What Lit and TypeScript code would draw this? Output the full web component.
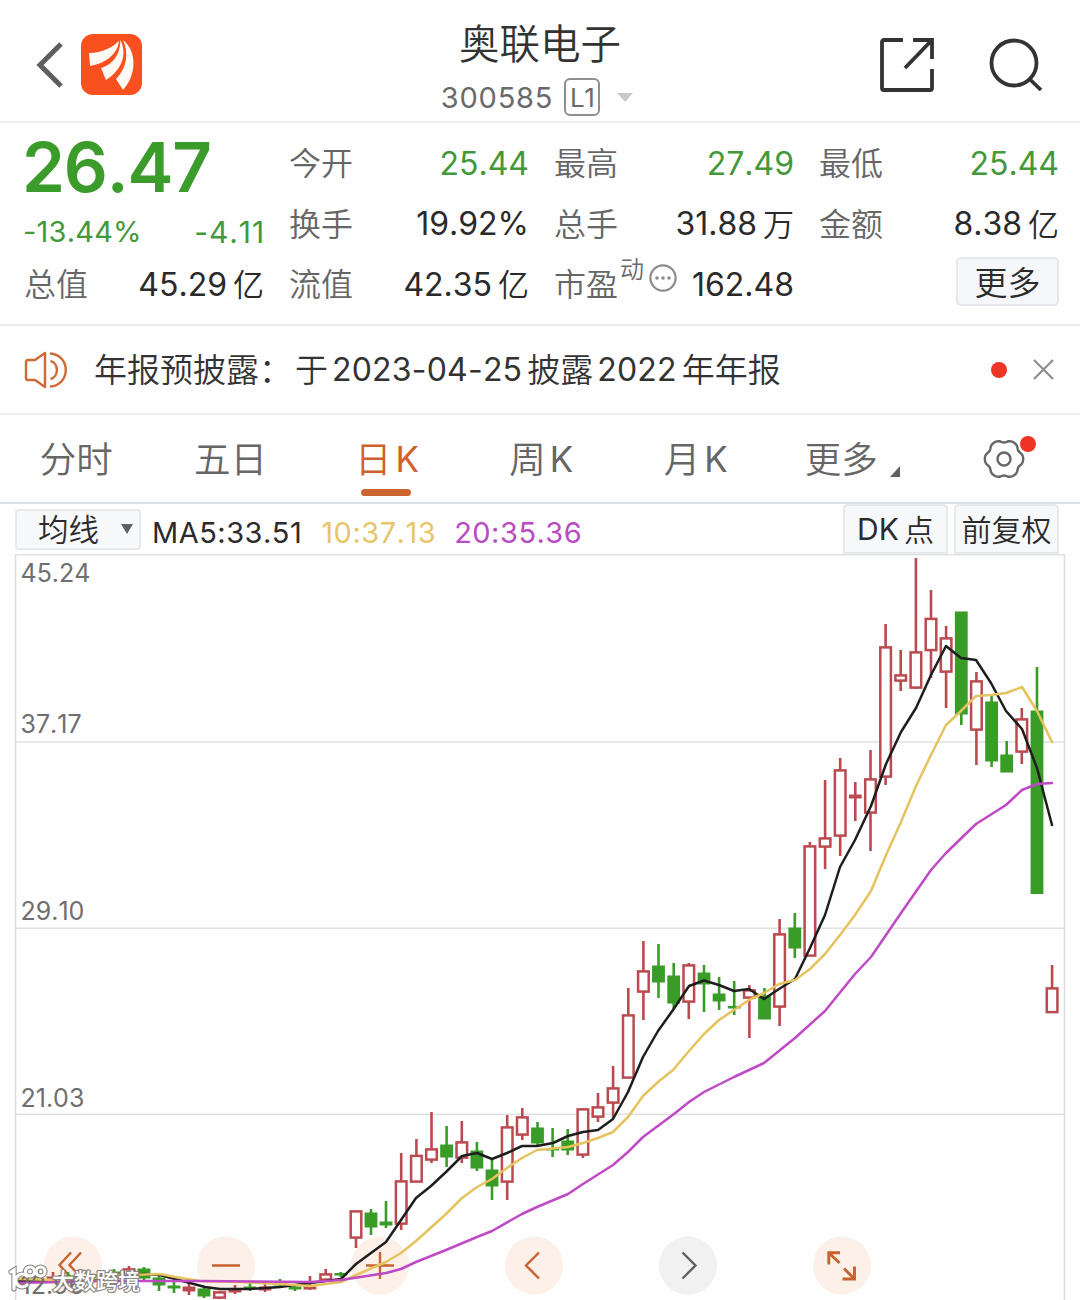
import { LitElement, html, svg, css } from "lit";
import { customElement } from "lit/decorators.js";
import { classMap } from "lit/directives/class-map.js";

type Candle = [x: number, high: number, top: number, bottom: number, low: number, up: 0 | 1];

const CANDLES: Candle[] = [
  [23, 1277, 1279, 1283, 1285, 1],
  [38, 1269, 1274, 1276, 1281, 0],
  [53, 1272, 1277, 1279, 1282, 1],
  [68, 1272, 1276, 1279, 1284, 0],
  [84, 1273, 1276, 1279, 1282, 1],
  [99, 1270, 1275, 1278, 1281, 0],
  [114, 1269, 1272, 1274, 1278, 0],
  [129, 1266, 1269, 1275, 1277, 1],
  [144, 1267, 1269, 1278, 1280, 0],
  [159, 1276, 1278, 1285, 1291, 0],
  [174, 1280, 1286, 1288, 1293, 0],
  [189, 1283, 1287, 1291, 1295, 1],
  [204, 1288, 1289, 1296, 1298, 0],
  [219.5, 1291, 1292, 1298, 1299, 1],
  [235, 1285, 1289, 1292, 1294, 1],
  [250, 1282, 1287, 1288, 1291, 0],
  [265, 1284, 1287, 1290, 1292, 1],
  [280, 1279, 1283, 1285, 1288, 0],
  [295, 1284, 1287, 1289, 1291, 0],
  [310, 1276, 1287, 1289, 1290, 1],
  [325.7, 1269, 1274, 1280, 1280, 1],
  [340.8, 1272, 1273.5, 1275, 1277, 0],
  [356, 1211, 1211, 1238, 1248, 1],
  [371, 1209, 1213, 1227, 1235, 0],
  [386, 1201, 1222, 1225, 1228, 0],
  [401.2, 1153, 1181, 1224, 1230, 1],
  [416.4, 1139, 1155.5, 1182, 1182, 1],
  [431.5, 1112, 1149, 1160, 1163, 1],
  [446.6, 1126, 1145, 1157, 1167, 0],
  [461.8, 1121, 1142, 1158, 1163, 1],
  [476.9, 1142, 1151, 1168, 1171, 0],
  [492, 1160, 1170, 1186, 1200, 0],
  [507.2, 1115, 1127, 1182, 1200, 1],
  [522.3, 1108, 1117, 1135, 1140, 1],
  [537.5, 1122, 1128, 1143, 1147, 0],
  [552.6, 1128, 1149, 1150, 1157, 0],
  [567.7, 1129, 1141, 1150, 1155, 0],
  [582.9, 1108, 1109, 1155, 1158, 1],
  [598, 1093, 1107, 1117, 1122, 1],
  [613.1, 1066, 1088, 1103, 1118, 1],
  [628.3, 988, 1015, 1078, 1078, 1],
  [643.4, 941, 971, 992, 1020, 1],
  [658.5, 944, 966, 982, 998, 0],
  [673.7, 963, 976, 1003, 1009, 0],
  [688.8, 963, 965, 1002, 1019, 1],
  [704, 965, 973, 984, 1012, 0],
  [719.1, 977, 994, 1001, 1010, 0],
  [734.2, 981, 1006.5, 1008, 1015, 0],
  [749.4, 985, 990, 998, 1038, 1],
  [764.5, 988, 996, 1019, 1019, 0],
  [779.6, 919, 934, 1007, 1026, 1],
  [794.8, 913, 928, 948, 958, 0],
  [809.9, 842, 846, 956, 956, 1],
  [825.1, 780, 838, 847, 869, 1],
  [840.2, 758, 770, 836, 856, 1],
  [855.3, 782, 795, 798, 821, 1],
  [870.5, 750, 779, 813, 851, 1],
  [885.6, 624, 647, 777, 785, 1],
  [900.7, 650, 675, 681, 691, 1],
  [915.9, 558, 652, 688, 689, 1],
  [931, 590, 618.5, 650.5, 678, 1],
  [946.1, 626, 638, 672, 708, 1],
  [961.3, 612, 612, 714, 725, 0],
  [976.4, 672, 681, 730, 765, 1],
  [991.6, 696, 702, 761, 767, 0],
  [1006.7, 741, 755, 772, 772, 0],
  [1021.8, 708, 719, 752, 764, 1],
  [1037, 667, 711, 893.5, 893, 0],
  [1052.1, 965, 988, 1012.5, 1012, 1],
];

const MA5 =
  "17,1281 60,1281 100,1280 115,1278 130,1275 145,1274 160,1275 175,1279 190,1283 205,1287 220,1289 250,1289 280,1287 310,1283 341,1279 356,1264 386,1242 416,1198 431,1186 446,1172 462,1156 477,1153 492,1159 507,1153 522,1146 537,1146 553,1143 568,1136 583,1132 598,1130 613,1119 628,1092 643,1057 658,1031 673,1010 689,986 704,980.5 719,985 734,991 749,989 764,999 779,989 795,979 810,948 825,915 840,867 855,840 871,806 886,764 901,732 916,708 931,675 946,646 961,658 976,660 991,683 1006,711 1022,729 1037,768 1052,825";
const MA10 =
  "17,1279 60,1280 100,1278 130,1275 160,1274 175,1277 200,1281 240,1282 280,1284 310,1286 341,1282 356,1275 386,1262 401,1253 416,1241 446,1214 462,1198 477,1187 492,1179 507,1168 522,1158 537,1150 553,1148.5 568,1147 583,1143 598,1138 613,1132 628,1117 643,1096 658,1082 673,1070 689,1051 704,1034 719,1020 734,1010 749,1000 764,993 779,984 795,980 810,969 825,954 840,935 855,915 871,891 886,855 901,822 916,786 931,755 946,725 961,711 976,696 991,695 1006,693 1022,687 1037,711 1052,742";
const MA20 =
  "17,1283 100,1281 200,1281 310,1282 341,1280 386,1273 401,1269 416,1262 446,1250 477,1237 492,1231 522,1214 537,1207 568,1194 583,1184 613,1165 628,1152 643,1137 674,1114 689,1102 704,1092 734,1077 764,1063 795,1038 825,1011 855,974 871,957 901,913 931,870 946,853 976,824 1006,805 1022,790 1037,784 1052,783";

const UP = "#bb4a50";
const DOWN = "#399c27";

@customElement("kline-chart")
export class KlineChart extends LitElement {
  static styles = css`
    :host { display: block; position: relative; height: 746px; overflow: hidden; }
    .plot { display: block; width: 1080px; height: 746px; }
    .axis { font: 25px Inter, sans-serif; font-kerning: none; fill: #6f6f6f; }
    .mark { font: 500 22px "Noto Sans CJK SC", sans-serif; fill: #fff; stroke: #8a8580; stroke-width: 2.4px; paint-order: stroke; stroke-linejoin: round; }
  `;

  private candle([x, high, top, bottom, low, up]: Candle) {
    const color = up ? UP : DOWN;
    const thin = bottom - top < 5;
    if (up && !thin) {
      return svg`
        <path d="M${x} ${high}V${top}M${x} ${bottom}V${low}" stroke=${color} stroke-width="2.6"/>
        <rect x=${x - 5.3} y=${top + 0.4} width="10.6" height=${bottom - top - 0.8} fill="#fff" stroke=${color} stroke-width="2.5"/>`;
    }
    return svg`
      <path d="M${x} ${high}V${low}" stroke=${color} stroke-width="2.6"/>
      <rect x=${x - 6.4} y=${top - 0.5} width="12.8" height=${bottom - top + 1} fill=${color}/>`;
  }

  render() {
    return html`<svg class="plot" viewBox="0 554 1080 746">
      <g fill="#fdf0e8">
        ${[73, 226, 380, 534, 842].map((x) => svg`<circle cx=${x} cy="1265.5" r="29"/>`)}
        <circle cx="688" cy="1265.5" r="29" fill="#f1f1f1"/>
      </g>
      <g fill="none" stroke="#dfe1e2" stroke-width="1.6">
        <path d="M15.5 1300V554.8H1064.5V1300"/>
        <path d="M16 742H1064M16 928.3H1064M16 1114.3H1064"/>
      </g>
      <g fill="none" stroke="#c8622f" stroke-width="2.4">
        <path d="M71 1252.5L59.5 1265L71 1277.5M81 1252.5L69.5 1265L81 1277.5"/>
        <path d="M212 1265.5H240M366 1265.5H394M380 1252V1279"/>
        <path d="M539 1252.5L526 1265.5L539 1278.5"/>
        <path d="M840 1252.8H828.8V1264.5M829.5 1253.5L839.5 1263M842.5 1279H854.5V1266.5M844 1268.5L854 1278.5" stroke-width="2.9"/>
        <path d="M682.5 1252.5L695.5 1265.5L682.5 1278.5" stroke="#606060"/>
      </g>
      ${CANDLES.map((c) => this.candle(c))}
      <g fill="none" stroke-width="2.5" stroke-linejoin="round" stroke-linecap="round">
        <polyline points=${MA5} stroke="#1e1e1e"/>
        <polyline points=${MA10} stroke="#e5c35e"/>
        <polyline points=${MA20} stroke="#bf49c6"/>
      </g>
      <g class="axis">
        <text x="20.5" y="581.5">45.24</text>
        <text x="20.5" y="733">37.17</text>
        <text x="20.5" y="919.5">29.10</text>
        <text x="20.5" y="1106.5">21.03</text>
        <text x="20.5" y="1294">12.96</text>
      </g>
      <g fill="none" stroke="#8a8580" stroke-width="5.2" stroke-linecap="round">
        <path d="M11 1272L14 1270V1289M27 1276A6.5 6.5 0 1 0 27 1285"/>
        <circle cx="30" cy="1271.5" r="4.5"/><circle cx="40.5" cy="1271.5" r="4.5"/>
      </g>
      <g fill="none" stroke="#fff" stroke-width="3.2" stroke-linecap="round">
        <path d="M11 1272L14 1270V1289M27 1276A6.5 6.5 0 1 0 27 1285"/>
        <circle cx="30" cy="1271.5" r="4.5"/><circle cx="40.5" cy="1271.5" r="4.5"/>
      </g>
      <text class="mark" x="52" y="1289">大数跨境</text>
    </svg>`;
  }
}

/** Six-lobed cog outline, sampled around a 42px box. */
const GEAR = Array.from({ length: 121 }, (_, i) => {
  const a = (i / 120) * Math.PI * 2;
  const r = 18.1 + 1.3 * Math.cos(6 * a) - 0.25 * Math.cos(12 * a);
  return `${(21 + r * Math.cos(a)).toFixed(2)},${(21 + r * Math.sin(a)).toFixed(2)}`;
}).join(" ");

const num = (n: string, unit = "") => html`<span class="num">${n}</span>${unit ? html`<span class="unit">${unit}</span>` : ""}`;

@customElement("app-root")
export class AppRoot extends LitElement {
  static styles = css`
    :host { display: block; width: 1080px; height: 1300px; overflow: hidden; background: #fefefe; color: #2b2b2b;
      font-family: Inter, "Noto Sans CJK SC", sans-serif; font-weight: 400; font-kerning: none; }
    * { box-sizing: border-box; }
    .header { height: 123px; border-bottom: 2px solid #efefef; display: grid; grid-template-columns: 360px 360px 360px; }
    .left { display: flex; align-items: center; gap: 17px; padding: 8px 0 0 35px; }
    .right { display: flex; align-items: center; justify-content: flex-end; gap: 52px; padding: 9px 37px 0 0; }
    .mid { display: flex; flex-direction: column; align-items: center; }
    .title { font-size: 40.5px; line-height: 50px; margin-top: 20px; color: #333; white-space: nowrap; font-weight: 350; }
    .code { display: flex; align-items: center; height: 38px; margin-top: 8px; padding-right: 6px; font-size: 29px; letter-spacing: 0.8px; color: #6a6a6a; }
    .level { width: 36px; height: 38px; margin-left: 11px; border: 2px solid #8f8f8f; border-radius: 6px; font-size: 26px; letter-spacing: -0.5px; display: grid; place-items: center; }
    .caret { margin-left: 17px; border: 8px solid transparent; border-top: 9px solid #c9c9c9; border-bottom: 0; }
    .quote { height: 203px; padding: 10px 21px 0 24px; border-bottom: 2px solid #ececec; display: grid;
      grid-template-columns: repeat(4, 240px); grid-template-rows: repeat(3, 60.5px); column-gap: 25px; }
    .cell { display: flex; align-items: center; justify-content: space-between; white-space: nowrap; }
    .label { font-size: 32px; color: #666; font-weight: 350; margin-top: -4px; }
    .value { display: flex; align-items: center; font-size: 32px; color: #2a2a2a; }
    .unit { font-size: 31px; margin: -3px 0 0 6px; font-weight: 350; }
    .green { color: #43983a; }
    .price { font-size: 69px; font-weight: 600; letter-spacing: -1.2px; color: #3b9b2b; line-height: 60px; padding-top: 7px; margin-left: -2px; }
    .change { font-size: 29px; padding-top: 16px; margin-left: -1px; }
    .pct { letter-spacing: 0.2px; }
    .diff { font-size: 30px; letter-spacing: 0.9px; margin-right: -1px; }
    .pe { display: flex; align-items: center; }
    .sup { font-size: 24px; color: #6b6b6b; margin: -33px 5px 0 2px; font-weight: 350; }
    .info { margin-top: -12px; }
    .more { justify-self: end; align-self: center; width: 103px; height: 49px; border: 2px solid #e6e7ea; border-radius: 5px; background: #f6f7fa;
      font-size: 33px; line-height: 48px; text-align: center; margin-top: -5px; font-weight: 350; }
    .notice { height: 89px; border-bottom: 2px solid #ececec; display: flex; align-items: center; padding: 0 26px 0 24px; }
    .msg { flex: 1; margin-left: 26px; font-size: 33px; display: flex; align-items: center; white-space: pre; color: #333; font-weight: 350; }
    .cjk { margin-top: -4px; }
    .msg .num { font-size: 32px; letter-spacing: 0.2px; margin-left: 4px; font-weight: 400; }
    .yu { margin-left: 3px; }
    .dot { width: 16px; height: 16px; border-radius: 50%; background: #ee3427; }
    .close { margin-left: 26px; }
    .tabs { height: 89px; border-bottom: 2px solid #dcdfe1; display: grid; grid-template-columns: repeat(7, 154.4px); }
    .tab { position: relative; display: flex; align-items: center; justify-content: center; font-size: 36.5px; color: #666; font-weight: 350; }
    .tab .cjk { margin: -3px 0 0 -2px; }
    .tab .ck { margin-left: 2px; }
    .tab .k { margin-left: 4px; font-weight: 400; font-size: 35px; }
    .tab.active { color: #cf622c; }
    .tab.active::after { content: ""; position: absolute; left: 52px; bottom: 6px; width: 50px; height: 7px; border-radius: 4px; background: #cb6430; }
    .tab .drop { margin-left: 6px; }
    .corner { align-self: flex-end; margin: 0 0 25px 12px; border-left: 10px solid transparent; border-bottom: 11px solid #606060; }
    .badge { position: absolute; left: 94px; top: 21px; width: 16px; height: 16px; border-radius: 50%; background: #ee3427; }
    .toolbar { height: 50px; display: flex; align-items: center; padding: 0 21px 0 15px; white-space: nowrap; font-size: 29px; }
    .select { width: 126px; height: 41px; border: 2px solid #e7e8e9; border-radius: 4px; background: #f8f9fa; display: flex; align-items: center;
      justify-content: space-between; padding: 0 6px 0 21px; font-size: 30.5px; font-weight: 350; }
    .select .cjk { margin-top: -3px; }
    .tri { border: 6px solid transparent; border-top: 10px solid #606060; border-bottom: 0; }
    .ma { padding-top: 7px; margin-left: 11px; letter-spacing: 0.5px; }
    .m10 { color: #e6c66a; margin-left: 19px; }
    .m20 { color: #b84cc4; margin-left: 18px; }
    .chip { width: 105px; height: 50px; margin-left: 6px; border: 2px solid #e7e8ea; border-radius: 5px 5px 0 0; background: #f7f8fa; display: flex; align-items: center; justify-content: center; font-size: 30px; }
    .chip .cjk { font-weight: 350; margin-top: -3px; }
    .first { margin-left: auto; }
    .gap { margin-left: 5px; }
  `;

  private cell(label: string, n: string, unit = "", green = false) {
    return html`<div class="cell"><span class="label">${label}</span>
      <span class=${classMap({ value: true, green })}>${num(n, unit)}</span></div>`;
  }

  render() {
    return html`
      <div class="header">
        <div class="left">
          <svg width="29" height="46" viewBox="0 0 29 46" fill="none" stroke="#5e5e5e" stroke-width="5"><path d="M26 2L5 23L26 44"/></svg>
          <svg width="61" height="61" viewBox="0 0 61 61">
            <rect width="61" height="61" rx="12" fill="#f8501f"/>
            <g fill="#fffaf4">
              <path d="M8 19C21 19 32 13 38 7C37 18 27 29 9 32Z"/>
              <path d="M39.5 6C46 20 42 35 25 46L20 34C33 30 39 20 39.5 6Z"/>
              <path d="M42 6C57 18 55 42 42 56L35 45C46 34 48 19 42 6Z"/>
            </g>
          </svg>
        </div>
        <div class="mid">
          <div class="title">奥联电子</div>
          <div class="code">300585<span class="level">L1</span><i class="caret"></i></div>
        </div>
        <div class="right">
          <svg width="56" height="56" viewBox="0 0 56 56" fill="none" stroke="#333" stroke-width="3.8">
            <path d="M24 3H5Q3 3 3 5V51Q3 53 5 53H51Q53 53 53 51V32"/><path d="M34 3H53V22M52 4L26 31"/>
          </svg>
          <svg width="56" height="56" viewBox="0 0 56 56" fill="none" stroke="#333" stroke-width="3.8">
            <circle cx="27" cy="26" r="22.5"/><path d="M42.5 42L54 53"/>
          </svg>
        </div>
      </div>

      <div class="quote">
        <div class="cell price">26.47</div>
        ${this.cell("今开", "25.44", "", true)}${this.cell("最高", "27.49", "", true)}${this.cell("最低", "25.44", "", true)}
        <div class="cell change green"><span class="pct">-13.44%</span><span class="diff">-4.11</span></div>
        ${this.cell("换手", "19.92%")}${this.cell("总手", "31.88", "万")}${this.cell("金额", "8.38", "亿")}
        ${this.cell("总值", "45.29", "亿")}${this.cell("流值", "42.35", "亿")}
        <div class="cell">
          <span class="pe"><span class="label">市盈</span><span class="sup">动</span>
            <svg class="info" width="28" height="28" viewBox="0 0 28 28"><circle cx="14" cy="14" r="12.6" fill="none" stroke="#8c8c8c" stroke-width="2.2"/>
              <g fill="#8c8c8c"><circle cx="8" cy="14" r="1.8"/><circle cx="14" cy="14" r="1.8"/><circle cx="20" cy="14" r="1.8"/></g></svg></span>
          <span class="value">162.48</span>
        </div>
        <div class="more">更多</div>
      </div>

      <div class="notice">
        <svg width="44" height="38" viewBox="0 0 44 38" fill="none" stroke="#cd6a35" stroke-width="2.4" stroke-linejoin="round">
          <path d="M21 2L11 9H4Q2 9 2 11V27Q2 29 4 29H11L21 36Z"/><path d="M26.5 10C35 12 35 26 26.5 28M26 2.5C47 4 47 34 26 35.5"/>
        </svg>
        <div class="msg"><span class="cjk">年报预披露：</span><span class="cjk yu">于</span><span class="num">2023-04-25</span><span class="cjk gap">披露</span><span class="num">2022</span><span class="cjk gap">年年报</span></div>
        <i class="dot"></i>
        <svg class="close" width="21" height="21" viewBox="0 0 21 21" stroke="#8e8e8e" stroke-width="2.2"><path d="M1 1L20 20M20 1L1 20"/></svg>
      </div>

      <div class="tabs">
        <div class="tab"><span class="cjk">分时</span></div>
        <div class="tab"><span class="cjk">五日</span></div>
        <div class="tab active"><span class="cjk ck">日</span><span class="k">K</span></div>
        <div class="tab"><span class="cjk ck">周</span><span class="k">K</span></div>
        <div class="tab"><span class="cjk ck">月</span><span class="k">K</span></div>
        <div class="tab"><span class="cjk drop">更多</span><i class="corner"></i></div>
        <div class="tab">
          <svg width="42" height="42" viewBox="0 0 42 42" fill="none" stroke="#666" stroke-width="2.4" stroke-linejoin="round">
            <polygon points=${GEAR}/><circle cx="21" cy="21" r="6.5"/>
          </svg><i class="badge"></i>
        </div>
      </div>

      <div class="toolbar">
        <div class="select"><span class="cjk">均线</span><i class="tri"></i></div>
        <span class="ma">MA5:33.51</span><span class="ma m10">10:37.13</span><span class="ma m20">20:35.36</span>
        <div class="chip first">DK<span class="cjk gap">点</span></div><div class="chip"><span class="cjk">前复权</span></div>
      </div>
      <kline-chart></kline-chart>
    `;
  }
}
